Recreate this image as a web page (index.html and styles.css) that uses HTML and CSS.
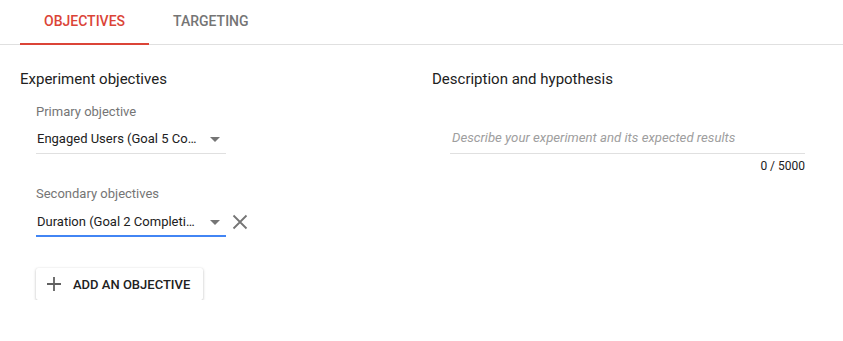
FILE: index.html
```html
<!DOCTYPE html>
<html lang="en">
<head>
<meta charset="utf-8">
<title>Experiment objectives</title>
<link rel="stylesheet" href="styles.css">
</head>
<body>
<nav class="tabs">
  <div class="tab active">Objectives</div>
  <div class="tab">Targeting</div>
</nav>
<main class="content">
  <section class="col">
    <h2 class="heading">Experiment objectives</h2>
    <div class="group">
      <div class="label">Primary objective</div>
      <div class="field-row">
        <div class="select">
          <span class="select-text">Engaged Users (Goal 5 Co…</span>
          <span class="arrow"></span>
        </div>
      </div>
      <div class="label label-second">Secondary objectives</div>
      <div class="field-row">
        <div class="select focused">
          <span class="select-text">Duration (Goal 2 Completi…</span>
          <span class="arrow"></span>
        </div>
        <svg class="close" width="16" height="16" viewBox="0 0 16 16" aria-hidden="true">
          <path d="M1.5 1.5 L14.5 14.5 M14.5 1.5 L1.5 14.5" stroke="#757575" stroke-width="1.8" fill="none"/>
        </svg>
      </div>
      <button class="btn">
        <svg class="plus" width="14" height="14" viewBox="0 0 14 14" aria-hidden="true">
          <path d="M7 0 V14 M0 7 H14" stroke="#616161" stroke-width="1.8" fill="none"/>
        </svg>
        <span>Add an objective</span>
      </button>
    </div>
  </section>
  <section class="col">
    <h2 class="heading">Description and hypothesis</h2>
    <div class="textarea-wrap">
      <div class="textarea">Describe your experiment and its expected results</div>
      <div class="counter">0 / 5000</div>
    </div>
  </section>
</main>
</body>
</html>
```

FILE: styles.css
```css
* { box-sizing: border-box; }

body {
  margin: 0;
  background: #ffffff;
  font-family: Roboto, "Liberation Sans", Arial, sans-serif;
  color: #212121;
}

.tabs {
  display: flex;
  height: 45px;
  padding-left: 20px;
  border-bottom: 1px solid #e0e0e0;
}

.tab {
  position: relative;
  padding: 0 24px;
  line-height: 42px;
  font-size: 14px;
  font-weight: 500;
  text-transform: uppercase;
  color: #757575;
}

.tab.active {
  color: #db4437;
}

.tab.active::after {
  content: "";
  position: absolute;
  left: 0;
  right: 0;
  bottom: -1px;
  height: 2px;
  background: #db4437;
}

.content {
  display: grid;
  grid-template-columns: 412px 1fr;
  padding: 24px 38px 0 20px;
}

.heading {
  margin: 0;
  font-size: 15px;
  line-height: 20px;
  font-weight: 400;
  color: #212121;
}

.group {
  padding-left: 16px;
}

.label {
  margin-top: 15px;
  font-size: 13px;
  line-height: 16px;
  color: #757575;
}

.label-second {
  margin-top: 32px;
}

.field-row {
  display: flex;
  align-items: flex-start;
}

.select {
  display: flex;
  align-items: center;
  width: 190px;
  padding: 9px 0 4px 1px;
  border-bottom: 1px solid #e0e0e0;
  font-size: 13px;
  line-height: 20px;
  color: #212121;
}

.select.focused {
  padding: 10px 0 3px 1px;
  border-bottom: 2px solid #4285f4;
}

.select-text {
  flex: 1;
  min-width: 0;
  white-space: nowrap;
}

.arrow {
  width: 0;
  height: 0;
  margin-right: 6px;
  border-left: 5px solid transparent;
  border-right: 5px solid transparent;
  border-top: 5px solid #757575;
}

.close {
  margin: 12px 0 0 6px;
}

.btn {
  display: flex;
  align-items: center;
  gap: 12px;
  margin-top: 31px;
  height: 32px;
  padding: 0 13px 0 11px;
  border: none;
  border-radius: 2px;
  background: #ffffff;
  box-shadow: 0 1px 3px rgba(0, 0, 0, 0.25), 0 0 1px rgba(0, 0, 0, 0.1);
  font-family: inherit;
  font-size: 13px;
  font-weight: 500;
  text-transform: uppercase;
  color: #212121;
}

.textarea-wrap {
  padding-left: 18px;
}

.textarea {
  margin-top: 39px;
  padding: 0 0 5px 2px;
  border-bottom: 1px solid #e0e0e0;
  font-size: 13.2px;
  line-height: 20px;
  font-style: italic;
  color: #9e9e9e;
}

.counter {
  margin-top: 4px;
  text-align: right;
  font-size: 12px;
  line-height: 16px;
  color: #212121;
}
```
